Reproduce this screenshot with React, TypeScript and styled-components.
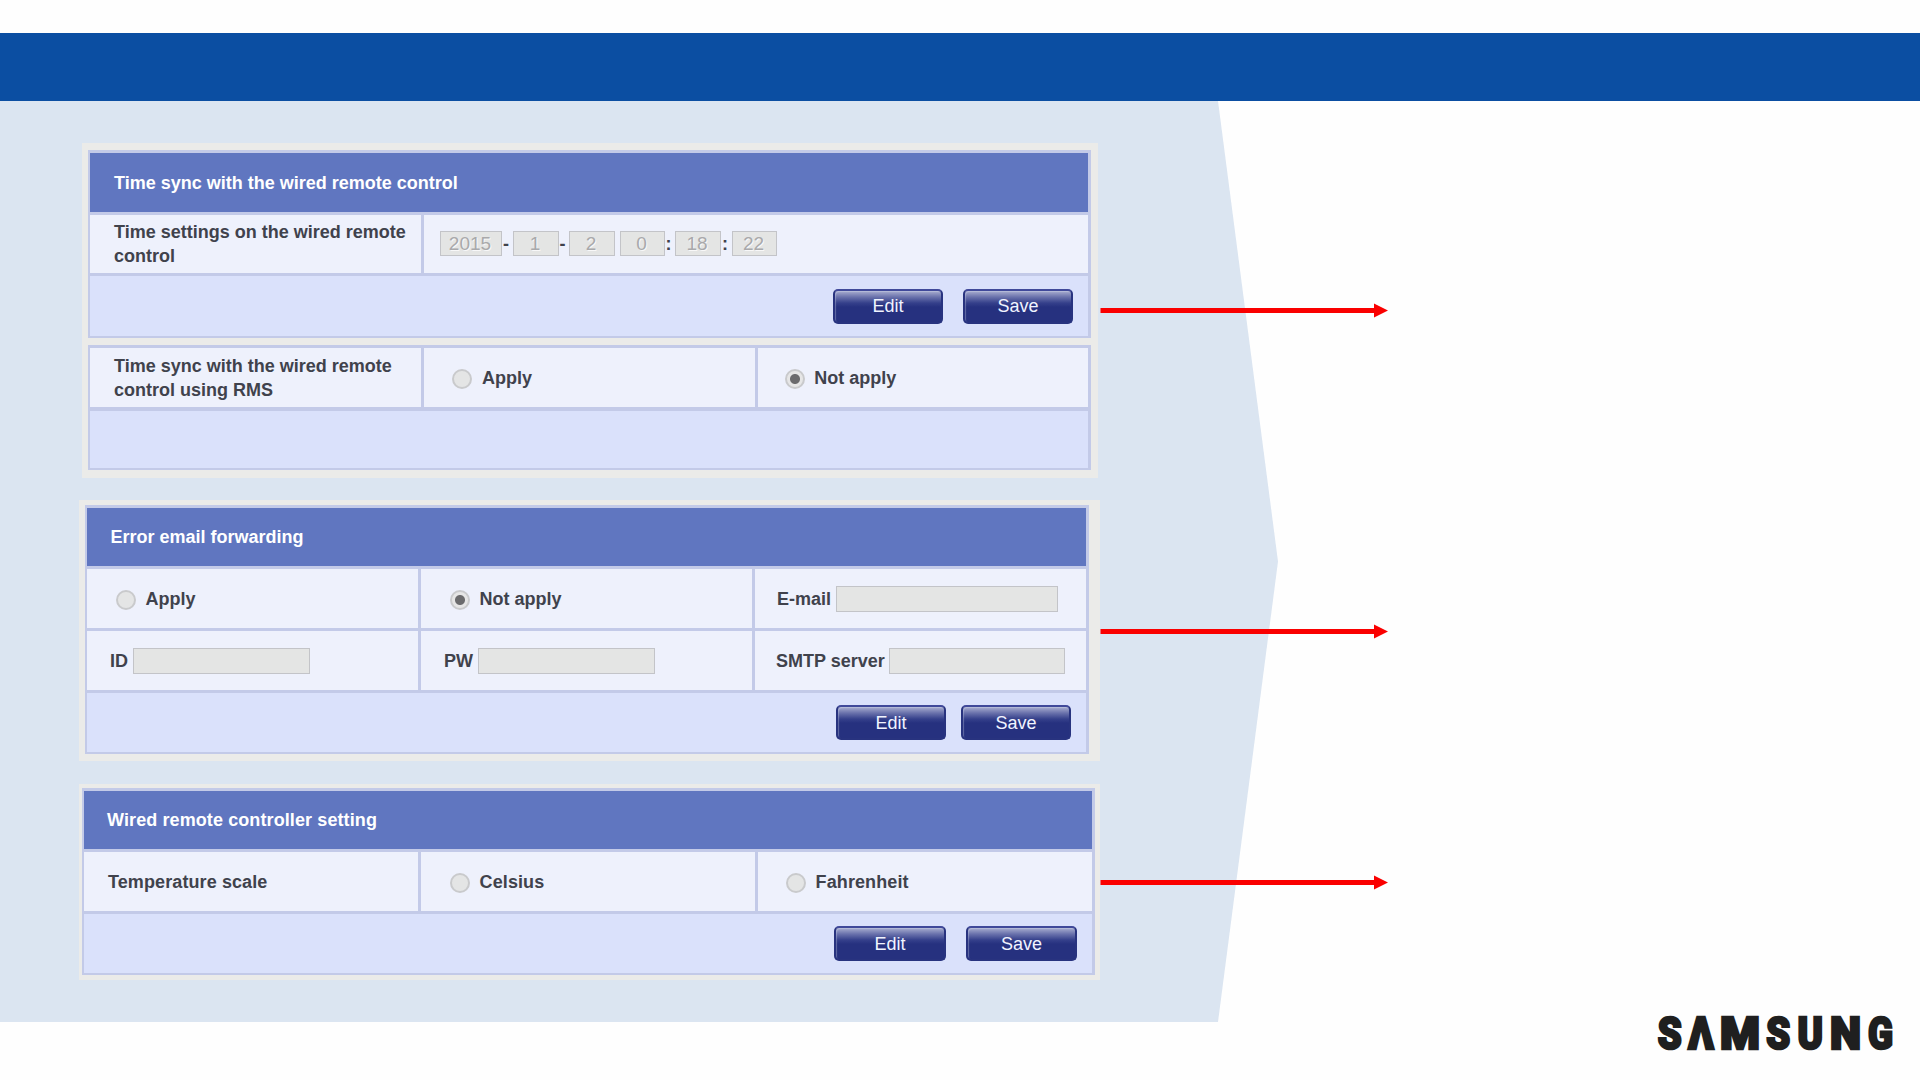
import styled, { createGlobalStyle } from "styled-components";

const GlobalStyle = createGlobalStyle`
  * {
    box-sizing: border-box;
  }
  body {
    margin: 0;
    background-color: #ffffff;
    font-family: "Liberation Sans", Arial, sans-serif;
  }
`;

const Page = styled.div`
  width: 1920px;
  height: 1080px;
  overflow: hidden;
  background-color: #fefefe;
  padding-top: 33px;
`;

const TopBar = styled.header`
  height: 68px;
  background-color: #0b4ea2;
`;

const Stage = styled.main`
  width: 1278px;
  height: 921px;
  padding: 42px 0 0 79px;
  background-color: #dbe5f1;
  clip-path: polygon(0 0, 1218px 0, 100% 50%, 1218px 100%, 0 100%);
`;

const StageWrapper = styled.div`
  position: relative;
`;

const Frame = styled.section<{ $ml: number; $w: number; $mb: number; $pad: string; $ls?: number }>`
  display: flex;
  flex-direction: column;
  gap: 7px;
  width: ${(props) => props.$w}px;
  margin-left: ${(props) => props.$ml}px;
  margin-bottom: ${(props) => props.$mb}px;
  padding: ${(props) => props.$pad};
  background-color: #ebebe9;
  letter-spacing: ${(props) => props.$ls ?? 0}px;
`;

const Table = styled.div<{ $gap?: number }>`
  display: flex;
  flex-direction: column;
  gap: ${(props) => props.$gap ?? 3}px;
  padding: 3px 3px 2px 2px;
  background-color: #c3cae8;
`;

const Title = styled.h2<{ $h: number; $pl?: number }>`
  display: flex;
  align-items: center;
  height: ${(props) => props.$h}px;
  margin: 0;
  padding: 0 0 0 ${(props) => props.$pl ?? 24}px;
  background-color: #6076c0;
  color: #ffffff;
  font-size: 18px;
  font-weight: 700;
  line-height: 24px;
`;

const Row = styled.div<{ $h: number; $cols: string }>`
  display: grid;
  grid-template-columns: ${(props) => props.$cols};
  column-gap: 3px;
  height: ${(props) => props.$h}px;
`;

const Cell = styled.div<{ $pl?: number }>`
  display: flex;
  align-items: center;
  padding-left: ${(props) => props.$pl ?? 24}px;
  background-color: #eef1fc;
  color: #40424c;
  font-size: 18px;
  font-weight: 700;
  line-height: 24px;
  white-space: nowrap;
`;

const Footer = styled.div<{ $h: number; $gap?: number }>`
  display: flex;
  justify-content: flex-end;
  align-items: center;
  gap: ${(props) => props.$gap ?? 20}px;
  height: ${(props) => props.$h}px;
  padding-right: 15px;
  background-color: #dae1fb;
`;

const Button = styled.button<{ $w?: number; $pt?: number }>`
  width: ${(props) => props.$w ?? 110}px;
  height: 35px;
  padding: ${(props) => props.$pt ?? 0}px 0 0;
  border: 2px solid #28337f;
  border-top-color: #40499a;
  border-radius: 5px;
  background: linear-gradient(#a9aed0 0, #6a72ac 6px, #35408b 12px, #26317f 16px);
  box-shadow: inset 1px 1px 1px rgba(215, 220, 240, 0.35);
  color: #f1f4ff;
  font-family: inherit;
  font-size: 18px;
  line-height: 30px;
`;

const Input = styled.span<{ $w: number; $ml?: number }>`
  display: inline-block;
  width: ${(props) => props.$w}px;
  height: 26px;
  margin-left: ${(props) => props.$ml ?? 0}px;
  border: 1.5px solid #c3c4c8;
  background-color: #e4e5e4;
`;

const DateInput = styled(Input)`
  height: 25px;
  margin-bottom: 1px;
  padding-right: 2px;
  color: #a9a9ab;
  font-size: 19px;
  font-weight: 400;
  line-height: 23px;
  text-align: center;
  text-shadow: 1px 1px 0 #f8f8f8;
`;

const Sep = styled.span<{ $w: number }>`
  width: ${(props) => props.$w}px;
  padding-right: 3px;
  text-align: center;
`;

const RadioDot = styled.span<{ $checked?: boolean }>`
  width: 20px;
  height: 20px;
  margin: 2px 9.6px 0 0;
  border: 2px solid #c9cacc;
  border-radius: 50%;
  background: ${(props) =>
    props.$checked
      ? "radial-gradient(circle, #6b6b6d 0 4.5px, #e6e6e6 5.5px)"
      : "#e4e5e5"};
`;

const ArrowSvg = styled.svg<{ $top: number }>`
  position: absolute;
  left: 1100px;
  top: ${(props) => props.$top}px;
`;

const Logo = styled.svg`
  display: block;
  margin: -15px 0 0 1650px;
`;

const LogoText = styled.text`
  font-family: Roboto, sans-serif;
  font-size: 45px;
  font-weight: 900;
  stroke-width: 2.6px;
`;

function Radio({ label, checked }: { label: string; checked?: boolean }) {
  return (
    <>
      <RadioDot $checked={checked} />
      {label}
    </>
  );
}

function Arrow({ top }: { top: number }) {
  return (
    <ArrowSvg $top={top} width="290" height="15" viewBox="0 0 290 15">
      <path d="M0.5 5H274V0.5L288 7.5L274 14.5V10H0.5Z" fill="#fa0000" />
    </ArrowSvg>
  );
}

const logoLetters = [
  { char: "S", x: 7.8, width: 24 },
  { char: "Λ", x: 38.3, width: 25.4 },
  { char: "M", x: 70, width: 40 },
  { char: "S", x: 116.3, width: 24 },
  { char: "U", x: 147.5, width: 25.5 },
  { char: "N", x: 180, width: 31 },
  { char: "G", x: 218, width: 25 },
];

function App() {
  return (
    <Page>
      <GlobalStyle />
      <TopBar />
      <StageWrapper>
        <Stage>
          <Frame $ml={3} $w={1016} $mb={22} $pad="7px 7px 8px 6px">
            <Table>
              <Title $h={59}>Time sync with the wired remote control</Title>
              <Row $h={58} $cols="331px 1fr">
                <Cell>
                  Time settings on the wired remote
                  <br />
                  control
                </Cell>
                <Cell $pl={16}>
                  <DateInput $w={62}>2015</DateInput>
                  <Sep $w={11}>-</Sep>
                  <DateInput $w={46}>1</DateInput>
                  <Sep $w={10}>-</Sep>
                  <DateInput $w={46}>2</DateInput>
                  <DateInput $w={45} $ml={5}>
                    0
                  </DateInput>
                  <Sep $w={10}>:</Sep>
                  <DateInput $w={46}>18</DateInput>
                  <Sep $w={11}>:</Sep>
                  <DateInput $w={45}>22</DateInput>
                </Cell>
              </Row>
              <Footer $h={60}>
                <Button>Edit</Button>
                <Button>Save</Button>
              </Footer>
            </Table>
            <Table $gap={4}>
              <Row $h={59} $cols="331px 331px 1fr">
                <Cell>
                  Time sync with the wired remote
                  <br />
                  control using RMS
                </Cell>
                <Cell $pl={28.4}>
                  <Radio label="Apply" />
                </Cell>
                <Cell $pl={26.6}>
                  <Radio label="Not apply" checked />
                </Cell>
              </Row>
              <Footer $h={57} />
            </Table>
          </Frame>

          <Frame $ml={0} $w={1021} $mb={23} $pad="5px 11px 7px 6px">
            <Table>
              <Title $h={58} $pl={23.5}>
                Error email forwarding
              </Title>
              <Row $h={59} $cols="331px 331px 1fr">
                <Cell $pl={29}>
                  <Radio label="Apply" />
                </Cell>
                <Cell $pl={29}>
                  <Radio label="Not apply" checked />
                </Cell>
                <Cell $pl={22}>
                  E-mail
                  <Input $w={222} $ml={5} />
                </Cell>
              </Row>
              <Row $h={59} $cols="331px 331px 1fr">
                <Cell $pl={23}>
                  ID
                  <Input $w={177} $ml={5} />
                </Cell>
                <Cell $pl={23}>
                  PW
                  <Input $w={177} $ml={5} />
                </Cell>
                <Cell $pl={21}>
                  SMTP server
                  <Input $w={176} $ml={4} />
                </Cell>
              </Row>
              <Footer $h={59} $gap={15}>
                <Button $pt={1}>Edit</Button>
                <Button $pt={1}>Save</Button>
              </Footer>
            </Table>
          </Frame>

          <Frame $ml={0} $w={1021} $mb={0} $pad="4px 5px 5px 3px" $ls={0.1}>
            <Table>
              <Title $h={58} $pl={23}>
                Wired remote controller setting
              </Title>
              <Row $h={59} $cols="334px 334px 1fr">
                <Cell>Temperature scale</Cell>
                <Cell $pl={29}>
                  <Radio label="Celsius" />
                </Cell>
                <Cell $pl={28}>
                  <Radio label="Fahrenheit" />
                </Cell>
              </Row>
              <Footer $h={59}>
                <Button $w={112} $pt={1}>
                  Edit
                </Button>
                <Button $w={111} $pt={1}>
                  Save
                </Button>
              </Footer>
            </Table>
          </Frame>
        </Stage>
        <Arrow top={202} />
        <Arrow top={523} />
        <Arrow top={774} />
      </StageWrapper>
      <Logo width="260" height="60" viewBox="0 0 260 60">
        <LogoText y="42" fill="#1f1f1f" stroke="#1f1f1f">
          {logoLetters.map((letter, i) => (
            <tspan
              key={i}
              x={letter.x}
              textLength={letter.width}
              lengthAdjust="spacingAndGlyphs"
            >
              {letter.char}
            </tspan>
          ))}
        </LogoText>
      </Logo>
    </Page>
  );
}

export default App;
